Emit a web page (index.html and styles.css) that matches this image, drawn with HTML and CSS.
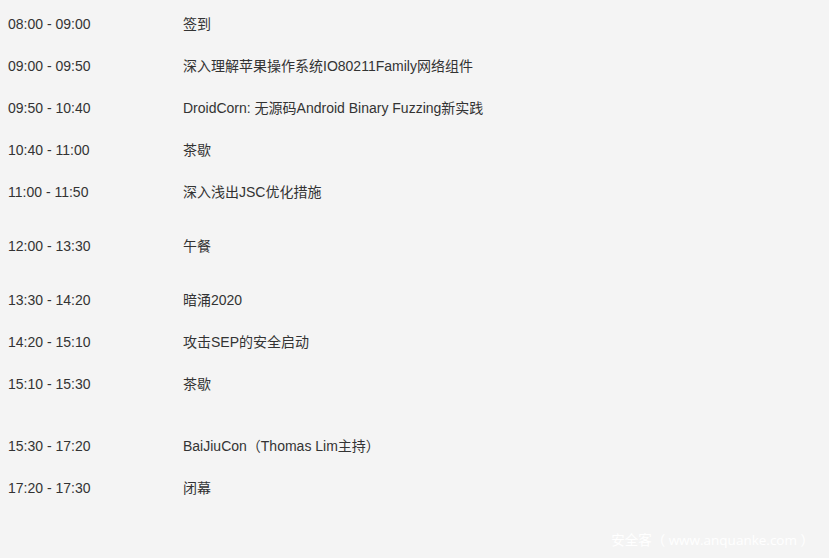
FILE: index.html
```html
<!DOCTYPE html>
<html lang="zh-CN">
<head>
  <meta charset="UTF-8">
  <meta name="viewport" content="width=device-width, initial-scale=1.0">
  <title>议程</title>
  <link rel="stylesheet" href="styles.css">
</head>
<body>

<div class="agenda">
  <div class="row"><span class="time">08:00 - 09:00</span><span class="topic">签到</span></div>
  <div class="row"><span class="time">09:00 - 09:50</span><span class="topic">深入理解苹果操作系统IO80211Family网络组件</span></div>
  <div class="row"><span class="time">09:50 - 10:40</span><span class="topic">DroidCorn: 无源码Android Binary Fuzzing新实践</span></div>
  <div class="row"><span class="time">10:40 - 11:00</span><span class="topic">茶歇</span></div>
  <div class="row row-gap"><span class="time">11:00 - 11:50</span><span class="topic">深入浅出JSC优化措施</span></div>
  <div class="row row-gap"><span class="time">12:00 - 13:30</span><span class="topic">午餐</span></div>
  <div class="row"><span class="time">13:30 - 14:20</span><span class="topic">暗涌2020</span></div>
  <div class="row"><span class="time">14:20 - 15:10</span><span class="topic">攻击SEP的安全启动</span></div>
  <div class="row row-wide"><span class="time">15:10 - 15:30</span><span class="topic">茶歇</span></div>
  <div class="row"><span class="time">15:30 - 17:20</span><span class="topic">BaiJiuCon（Thomas Lim主持）</span></div>
  <div class="row"><span class="time">17:20 - 17:30</span><span class="topic">闭幕</span></div>
</div>

<div class="watermark">安全客（ www.anquanke.com ）</div>

</body>
</html>
```

FILE: styles.css
```css
html, body {
  margin: 0;
  height: 100%;
  background-color: #f4f4f4;
}

body {
  font-family: "Liberation Sans", Arial, "Noto Sans CJK SC", sans-serif;
  font-size: 14px;
  color: #333;
  overflow: hidden;
}

.agenda {
  padding: 3px 0 0 8px;
}

.row {
  display: flex;
  line-height: 20px;
  padding: 11px 0;
}

.row-gap {
  padding-bottom: 23px;
}

.row-wide {
  padding-bottom: 31px;
}

.time {
  width: 175px;
  flex-shrink: 0;
}

.watermark {
  position: absolute;
  right: 15px;
  bottom: 9px;
  font-family: "Open Sans", "Noto Sans CJK SC", sans-serif;
  font-size: 13.5px;
  color: #fff;
}
```
